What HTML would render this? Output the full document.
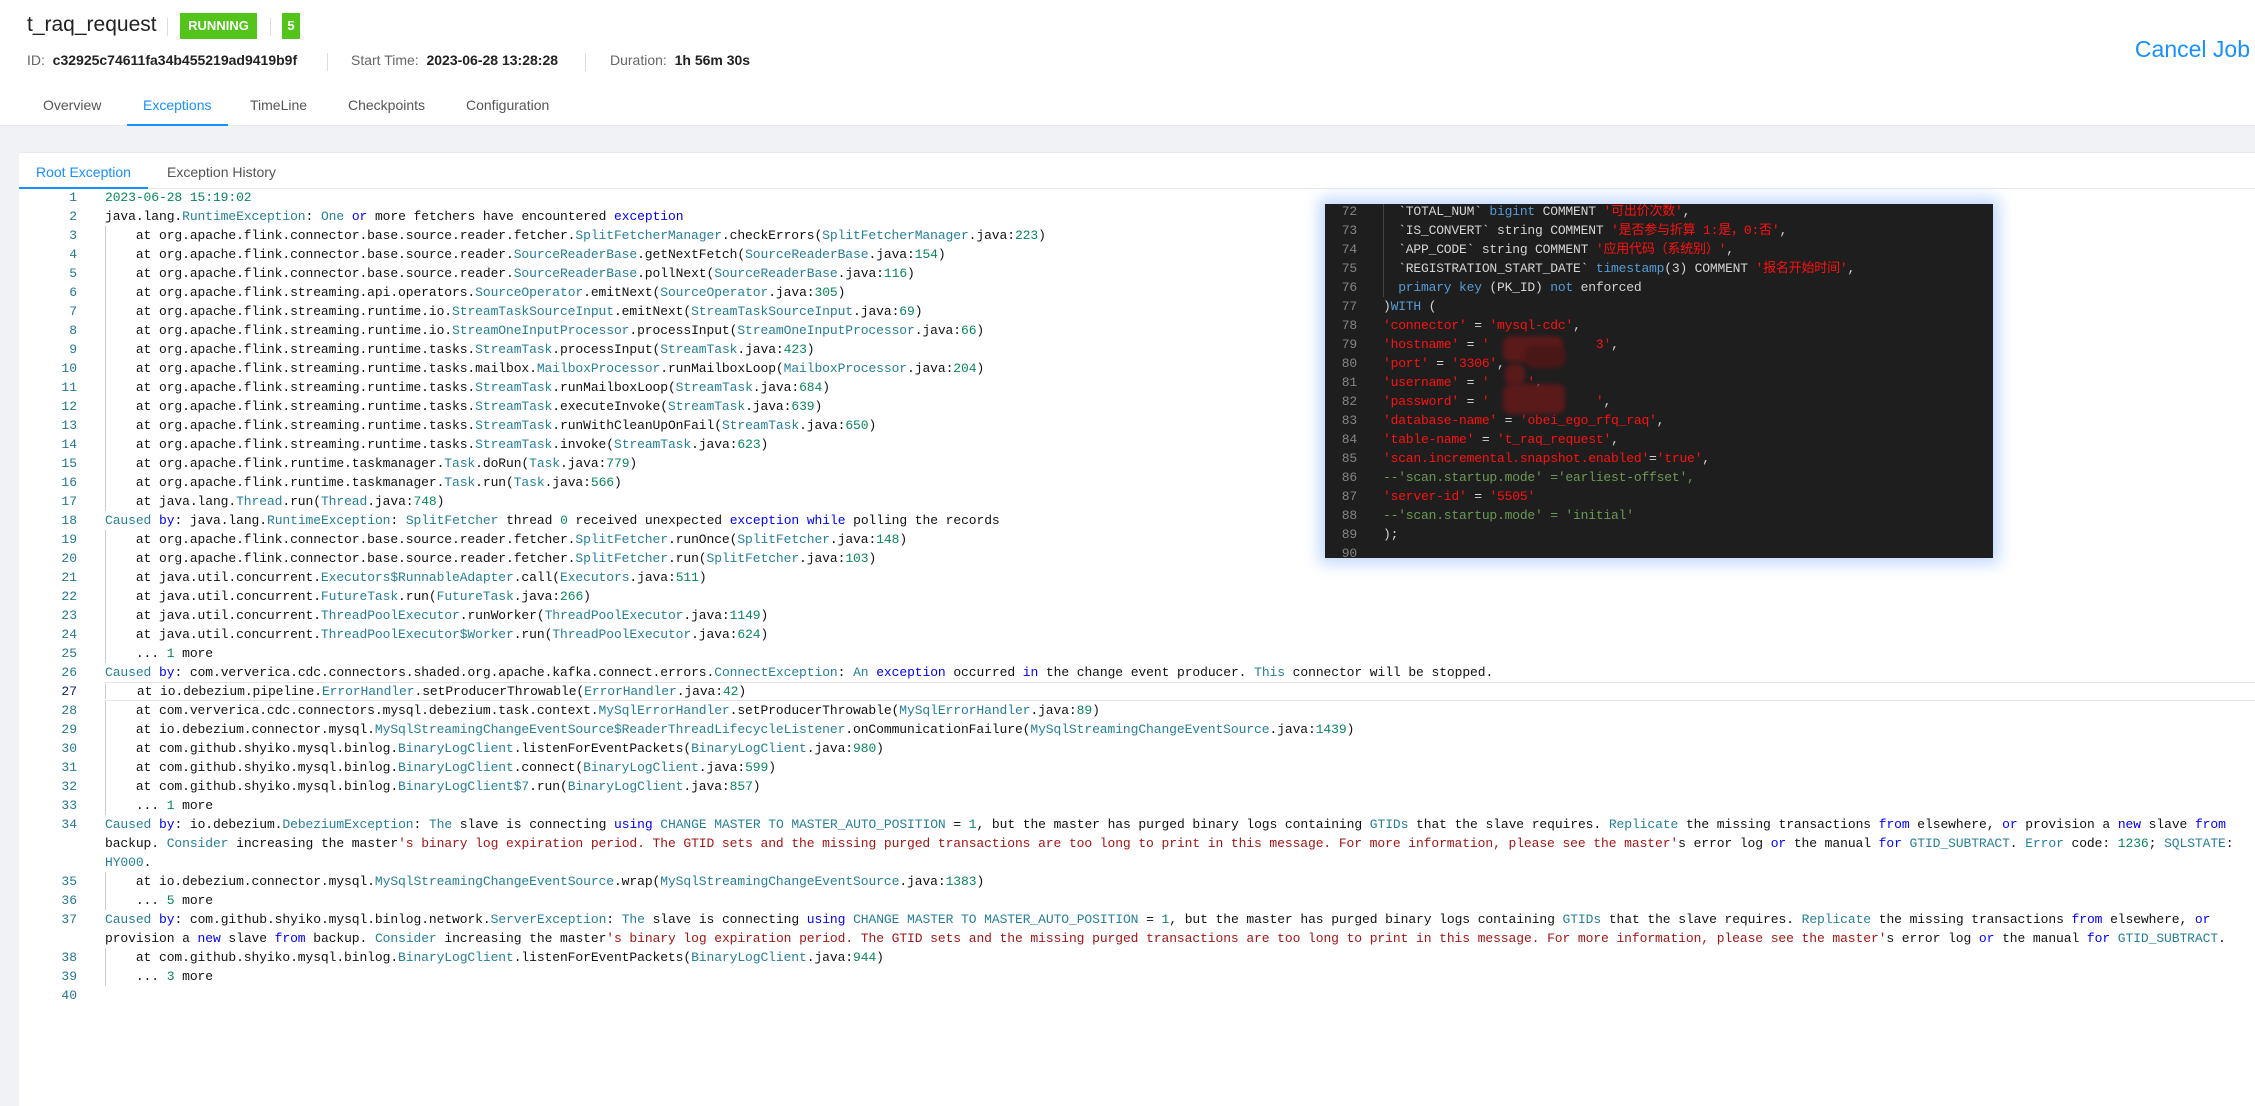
<!DOCTYPE html>
<html><head><meta charset="utf-8">
<style>
*{margin:0;padding:0;box-sizing:border-box}
body{width:2255px;height:1106px;overflow:hidden;background:#f0f2f5;font-family:"Liberation Sans",sans-serif;position:relative}
.hdr{position:absolute;left:0;top:0;width:2255px;height:126px;background:#fff;border-bottom:1px solid #e8e8e8}
.abs{position:absolute;white-space:nowrap}
.title{left:27px;top:13px;font-size:21px;color:#222}
.vsep{width:1px;height:18px;background:#ddd}
.badge{background:#52c41a;color:#fff;font-weight:bold;font-size:13px;height:26px;line-height:26px;text-align:center}
.meta{top:52px;font-size:14px;color:#666}
.meta b{color:#222}
.tab{top:97px;font-size:14px;color:#555}
.card{position:absolute;left:19px;top:152px;width:2236px;height:954px;background:#fff;border-top:1px solid #e8e8e8}
.code{position:absolute;left:0;top:188px;width:2255px;font-family:"Liberation Mono",monospace;font-size:13px;letter-spacing:-0.09px;color:#111}
.r{height:19px;line-height:19px;white-space:pre;position:relative;padding-left:105px}
.r .ln{position:absolute;left:0;width:77px;text-align:right;color:#237893;letter-spacing:0}
.g{background:linear-gradient(#ccc,#ccc) 105px 0/1px 19px no-repeat}
.hl{box-shadow:inset 0 1px #e4e4e4,inset 0 -1px #e4e4e4;margin-left:105px;padding-left:0}
.hl .ln{left:-105px;color:#0b216f}
.t{color:#267f99}.k{color:#0000ff}.n{color:#098658}.s{color:#a31515}
.pan{position:absolute;left:1325px;top:204px;width:668px;height:354px;background:#1e1e1e;box-shadow:0 0 14px 6px rgba(120,170,255,.45);overflow:hidden;font-family:"Liberation Mono","Noto Sans CJK SC",monospace;font-size:13px;letter-spacing:-0.2px;color:#d4d4d4}
.p{height:19px;line-height:19px;white-space:pre;position:relative;padding-left:58px}
.p .ln{position:absolute;left:0;width:32px;text-align:right;color:#858585}
.pg{background:linear-gradient(#444,#444) 58px 0/1px 19px no-repeat}
.b{color:#569cd6}.rd{color:#f11}.cm{color:#6a9955}
.blob{position:absolute;background:#5a1a1a;filter:blur(2px);border-radius:8px}
</style></head><body>
<div class="hdr">
<div class="abs title">t_raq_request</div>
<div class="abs vsep" style="left:167px;top:18px"></div>
<div class="abs badge" style="left:180px;top:13px;width:77px">RUNNING</div>
<div class="abs vsep" style="left:270px;top:18px"></div>
<div class="abs badge" style="left:282px;top:13px;width:18px">5</div>
<div class="abs meta" style="left:27px">ID: &nbsp;<b>c32925c74611fa34b455219ad9419b9f</b></div>
<div class="abs vsep" style="left:327px;top:53px"></div>
<div class="abs meta" style="left:351px">Start Time: &nbsp;<b>2023-06-28 13:28:28</b></div>
<div class="abs vsep" style="left:585px;top:53px"></div>
<div class="abs meta" style="left:610px">Duration: &nbsp;<b>1h 56m 30s</b></div>
<div class="abs" style="right:5px;top:36px;font-size:23px;color:#1890ff">Cancel Job</div>
<div class="abs tab" style="left:43px">Overview</div>
<div class="abs tab" style="left:143px;color:#1890ff">Exceptions</div>
<div class="abs tab" style="left:250px">TimeLine</div>
<div class="abs tab" style="left:348px">Checkpoints</div>
<div class="abs tab" style="left:466px">Configuration</div>
<div class="abs" style="left:127px;top:124px;width:101px;height:2px;background:#1890ff"></div>
</div>
<div class="card">
<div class="abs" style="left:17px;top:11px;font-size:14px;color:#1890ff">Root Exception</div>
<div class="abs" style="left:148px;top:11px;font-size:14px;color:#555">Exception History</div>
<div class="abs" style="left:0;top:35px;width:2236px;height:1px;background:#e8e8e8"></div>
<div class="abs" style="left:0;top:34px;width:129px;height:2px;background:#1890ff"></div>
</div>
<div class="code">
<div class="r"><span class="ln">1</span><span class="n">2023-06-28 15:19:02</span></div>
<div class="r"><span class="ln">2</span>java.lang.<span class="t">RuntimeException</span>: <span class="t">One</span> <span class="k">or</span> more fetchers have encountered <span class="k">exception</span></div>
<div class="r g"><span class="ln">3</span>    at org.apache.flink.connector.base.source.reader.fetcher.<span class="t">SplitFetcherManager</span>.checkErrors(<span class="t">SplitFetcherManager</span>.java:<span class="n">223</span>)</div>
<div class="r g"><span class="ln">4</span>    at org.apache.flink.connector.base.source.reader.<span class="t">SourceReaderBase</span>.getNextFetch(<span class="t">SourceReaderBase</span>.java:<span class="n">154</span>)</div>
<div class="r g"><span class="ln">5</span>    at org.apache.flink.connector.base.source.reader.<span class="t">SourceReaderBase</span>.pollNext(<span class="t">SourceReaderBase</span>.java:<span class="n">116</span>)</div>
<div class="r g"><span class="ln">6</span>    at org.apache.flink.streaming.api.operators.<span class="t">SourceOperator</span>.emitNext(<span class="t">SourceOperator</span>.java:<span class="n">305</span>)</div>
<div class="r g"><span class="ln">7</span>    at org.apache.flink.streaming.runtime.io.<span class="t">StreamTaskSourceInput</span>.emitNext(<span class="t">StreamTaskSourceInput</span>.java:<span class="n">69</span>)</div>
<div class="r g"><span class="ln">8</span>    at org.apache.flink.streaming.runtime.io.<span class="t">StreamOneInputProcessor</span>.processInput(<span class="t">StreamOneInputProcessor</span>.java:<span class="n">66</span>)</div>
<div class="r g"><span class="ln">9</span>    at org.apache.flink.streaming.runtime.tasks.<span class="t">StreamTask</span>.processInput(<span class="t">StreamTask</span>.java:<span class="n">423</span>)</div>
<div class="r g"><span class="ln">10</span>    at org.apache.flink.streaming.runtime.tasks.mailbox.<span class="t">MailboxProcessor</span>.runMailboxLoop(<span class="t">MailboxProcessor</span>.java:<span class="n">204</span>)</div>
<div class="r g"><span class="ln">11</span>    at org.apache.flink.streaming.runtime.tasks.<span class="t">StreamTask</span>.runMailboxLoop(<span class="t">StreamTask</span>.java:<span class="n">684</span>)</div>
<div class="r g"><span class="ln">12</span>    at org.apache.flink.streaming.runtime.tasks.<span class="t">StreamTask</span>.executeInvoke(<span class="t">StreamTask</span>.java:<span class="n">639</span>)</div>
<div class="r g"><span class="ln">13</span>    at org.apache.flink.streaming.runtime.tasks.<span class="t">StreamTask</span>.runWithCleanUpOnFail(<span class="t">StreamTask</span>.java:<span class="n">650</span>)</div>
<div class="r g"><span class="ln">14</span>    at org.apache.flink.streaming.runtime.tasks.<span class="t">StreamTask</span>.invoke(<span class="t">StreamTask</span>.java:<span class="n">623</span>)</div>
<div class="r g"><span class="ln">15</span>    at org.apache.flink.runtime.taskmanager.<span class="t">Task</span>.doRun(<span class="t">Task</span>.java:<span class="n">779</span>)</div>
<div class="r g"><span class="ln">16</span>    at org.apache.flink.runtime.taskmanager.<span class="t">Task</span>.run(<span class="t">Task</span>.java:<span class="n">566</span>)</div>
<div class="r g"><span class="ln">17</span>    at java.lang.<span class="t">Thread</span>.run(<span class="t">Thread</span>.java:<span class="n">748</span>)</div>
<div class="r"><span class="ln">18</span><span class="t">Caused</span> <span class="k">by</span>: java.lang.<span class="t">RuntimeException</span>: <span class="t">SplitFetcher</span> thread <span class="n">0</span> received unexpected <span class="k">exception</span> <span class="k">while</span> polling the records</div>
<div class="r g"><span class="ln">19</span>    at org.apache.flink.connector.base.source.reader.fetcher.<span class="t">SplitFetcher</span>.runOnce(<span class="t">SplitFetcher</span>.java:<span class="n">148</span>)</div>
<div class="r g"><span class="ln">20</span>    at org.apache.flink.connector.base.source.reader.fetcher.<span class="t">SplitFetcher</span>.run(<span class="t">SplitFetcher</span>.java:<span class="n">103</span>)</div>
<div class="r g"><span class="ln">21</span>    at java.util.concurrent.<span class="t">Executors$RunnableAdapter</span>.call(<span class="t">Executors</span>.java:<span class="n">511</span>)</div>
<div class="r g"><span class="ln">22</span>    at java.util.concurrent.<span class="t">FutureTask</span>.run(<span class="t">FutureTask</span>.java:<span class="n">266</span>)</div>
<div class="r g"><span class="ln">23</span>    at java.util.concurrent.<span class="t">ThreadPoolExecutor</span>.runWorker(<span class="t">ThreadPoolExecutor</span>.java:<span class="n">1149</span>)</div>
<div class="r g"><span class="ln">24</span>    at java.util.concurrent.<span class="t">ThreadPoolExecutor$Worker</span>.run(<span class="t">ThreadPoolExecutor</span>.java:<span class="n">624</span>)</div>
<div class="r g"><span class="ln">25</span>    ... <span class="n">1</span> more</div>
<div class="r"><span class="ln">26</span><span class="t">Caused</span> <span class="k">by</span>: com.ververica.cdc.connectors.shaded.org.apache.kafka.connect.errors.<span class="t">ConnectException</span>: <span class="t">An</span> <span class="k">exception</span> occurred <span class="k">in</span> the change event producer. <span class="t">This</span> connector will be stopped.</div>
<div class="r hl"><span class="ln">27</span><span style="border-left:1px solid #ccc">    </span>at io.debezium.pipeline.<span class="t">ErrorHandler</span>.setProducerThrowable(<span class="t">ErrorHandler</span>.java:<span class="n">42</span>)</div>
<div class="r g"><span class="ln">28</span>    at com.ververica.cdc.connectors.mysql.debezium.task.context.<span class="t">MySqlErrorHandler</span>.setProducerThrowable(<span class="t">MySqlErrorHandler</span>.java:<span class="n">89</span>)</div>
<div class="r g"><span class="ln">29</span>    at io.debezium.connector.mysql.<span class="t">MySqlStreamingChangeEventSource$ReaderThreadLifecycleListener</span>.onCommunicationFailure(<span class="t">MySqlStreamingChangeEventSource</span>.java:<span class="n">1439</span>)</div>
<div class="r g"><span class="ln">30</span>    at com.github.shyiko.mysql.binlog.<span class="t">BinaryLogClient</span>.listenForEventPackets(<span class="t">BinaryLogClient</span>.java:<span class="n">980</span>)</div>
<div class="r g"><span class="ln">31</span>    at com.github.shyiko.mysql.binlog.<span class="t">BinaryLogClient</span>.connect(<span class="t">BinaryLogClient</span>.java:<span class="n">599</span>)</div>
<div class="r g"><span class="ln">32</span>    at com.github.shyiko.mysql.binlog.<span class="t">BinaryLogClient$7</span>.run(<span class="t">BinaryLogClient</span>.java:<span class="n">857</span>)</div>
<div class="r g"><span class="ln">33</span>    ... <span class="n">1</span> more</div>
<div class="r"><span class="ln">34</span><span class="t">Caused</span> <span class="k">by</span>: io.debezium.<span class="t">DebeziumException</span>: <span class="t">The</span> slave is connecting <span class="k">using</span> <span class="t">CHANGE MASTER TO MASTER_AUTO_POSITION</span> = <span class="n">1</span>, but the master has purged binary logs containing <span class="t">GTIDs</span> that the slave requires. <span class="t">Replicate</span> the missing transactions <span class="k">from</span> elsewhere, <span class="k">or</span> provision a <span class="k">new</span> slave <span class="k">from</span></div>
<div class="r">backup. <span class="t">Consider</span> increasing the master<span class="s">'s binary log expiration period. The GTID sets and the missing purged transactions are too long to print in this message. For more information, please see the master'</span>s error log <span class="k">or</span> the manual <span class="k">for</span> <span class="t">GTID_SUBTRACT</span>. <span class="t">Error</span> code: <span class="n">1236</span>; <span class="t">SQLSTATE</span>:</div>
<div class="r"><span class="t">HY000</span>.</div>
<div class="r g"><span class="ln">35</span>    at io.debezium.connector.mysql.<span class="t">MySqlStreamingChangeEventSource</span>.wrap(<span class="t">MySqlStreamingChangeEventSource</span>.java:<span class="n">1383</span>)</div>
<div class="r g"><span class="ln">36</span>    ... <span class="n">5</span> more</div>
<div class="r"><span class="ln">37</span><span class="t">Caused</span> <span class="k">by</span>: com.github.shyiko.mysql.binlog.network.<span class="t">ServerException</span>: <span class="t">The</span> slave is connecting <span class="k">using</span> <span class="t">CHANGE MASTER TO MASTER_AUTO_POSITION</span> = <span class="n">1</span>, but the master has purged binary logs containing <span class="t">GTIDs</span> that the slave requires. <span class="t">Replicate</span> the missing transactions <span class="k">from</span> elsewhere, <span class="k">or</span></div>
<div class="r">provision a <span class="k">new</span> slave <span class="k">from</span> backup. <span class="t">Consider</span> increasing the master<span class="s">'s binary log expiration period. The GTID sets and the missing purged transactions are too long to print in this message. For more information, please see the master'</span>s error log <span class="k">or</span> the manual <span class="k">for</span> <span class="t">GTID_SUBTRACT</span>.</div>
<div class="r g"><span class="ln">38</span>    at com.github.shyiko.mysql.binlog.<span class="t">BinaryLogClient</span>.listenForEventPackets(<span class="t">BinaryLogClient</span>.java:<span class="n">944</span>)</div>
<div class="r g"><span class="ln">39</span>    ... <span class="n">3</span> more</div>
<div class="r"><span class="ln">40</span></div>
</div>
<div class="pan">
<div style="position:absolute;left:0;top:-2px;width:100%">
<div class="p pg"><span class="ln">72</span>  `TOTAL_NUM` <span class="b">bigint</span> COMMENT <span class="rd">'可出价次数'</span>,</div>
<div class="p pg"><span class="ln">73</span>  `IS_CONVERT` string COMMENT <span class="rd">'是否参与折算 1:是，0:否'</span>,</div>
<div class="p pg"><span class="ln">74</span>  `APP_CODE` string COMMENT <span class="rd">'应用代码（系统别）'</span>,</div>
<div class="p pg"><span class="ln">75</span>  `REGISTRATION_START_DATE` <span class="b">timestamp</span>(3) COMMENT <span class="rd">'报名开始时间'</span>,</div>
<div class="p pg"><span class="ln">76</span>  <span class="b">primary key</span> (PK_ID) <span class="b">not</span> enforced</div>
<div class="p"><span class="ln">77</span>)<span class="b">WITH</span> (</div>
<div class="p"><span class="ln">78</span><span class="rd">'connector'</span> = <span class="rd">'mysql-cdc'</span>,</div>
<div class="p"><span class="ln">79</span><span class="rd">'hostname'</span> = <span class="rd">'              3'</span>,</div>
<div class="p"><span class="ln">80</span><span class="rd">'port'</span> = <span class="rd">'3306'</span>,</div>
<div class="p"><span class="ln">81</span><span class="rd">'username'</span> = <span class="rd">'     '</span>,</div>
<div class="p"><span class="ln">82</span><span class="rd">'password'</span> = <span class="rd">'              '</span>,</div>
<div class="p"><span class="ln">83</span><span class="rd">'database-name'</span> = <span class="rd">'obei_ego_rfq_raq'</span>,</div>
<div class="p"><span class="ln">84</span><span class="rd">'table-name'</span> = <span class="rd">'t_raq_request'</span>,</div>
<div class="p"><span class="ln">85</span><span class="rd">'scan.incremental.snapshot.enabled'</span>=<span class="rd">'true'</span>,</div>
<div class="p"><span class="ln">86</span><span class="cm">--'scan.startup.mode' ='earliest-offset',</span></div>
<div class="p"><span class="ln">87</span><span class="rd">'server-id'</span> = <span class="rd">'5505'</span></div>
<div class="p"><span class="ln">88</span><span class="cm">--'scan.startup.mode' = 'initial'</span></div>
<div class="p"><span class="ln">89</span>);</div>
<div class="p"><span class="ln">90</span></div>
</div>
<div class="blob" style="left:178px;top:132px;width:60px;height:26px"></div>
<div class="blob" style="left:200px;top:142px;width:40px;height:22px;background:#4a1717"></div>
<div class="blob" style="left:180px;top:160px;width:20px;height:22px"></div>
<div class="blob" style="left:178px;top:180px;width:62px;height:30px"></div>
</div>
</body></html>
